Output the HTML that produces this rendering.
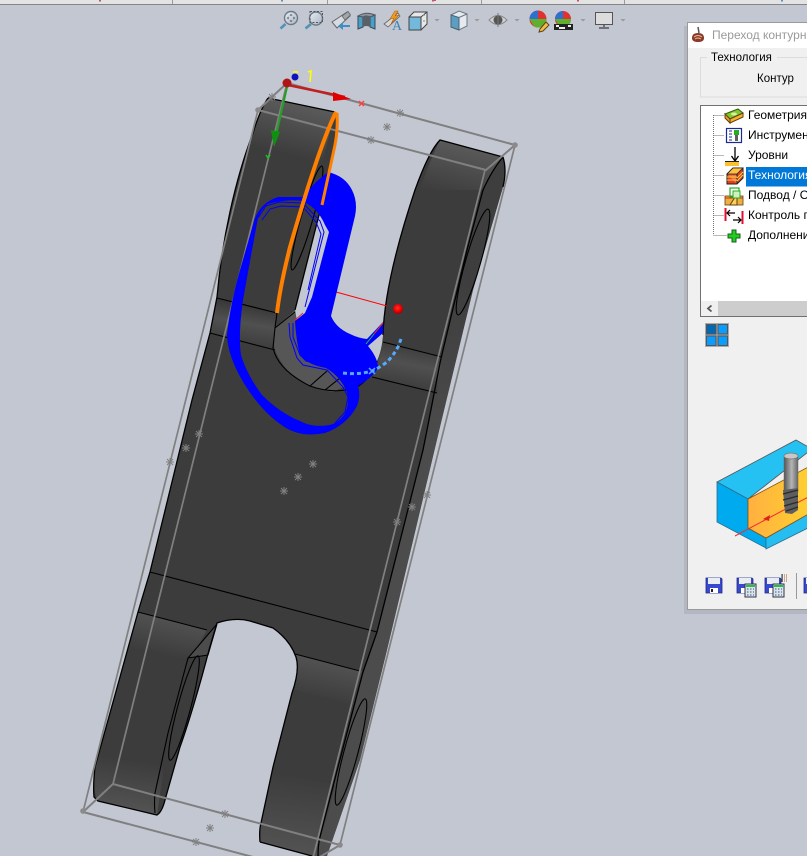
<!DOCTYPE html>
<html><head><meta charset="utf-8">
<style>
html,body{margin:0;padding:0;width:807px;height:856px;overflow:hidden;background:#c2c7d2}
svg{display:block}
text{font-family:"Liberation Sans",sans-serif;font-size:12px;fill:#000}
</style></head>
<body>
<svg width="807" height="856" viewBox="0 0 807 856" xmlns="http://www.w3.org/2000/svg">
<defs>
<clipPath id="cp"><path d="M268,98 L335,112 Q339,114 338,122 L336,137 L322,203 L295,310 L300,340 L340,360 L370,365 L377,361 Q382,350 383,335 C384,300 395,250 415,190 C424,165 432,148 440,140 L503,157 Q507,170 503,187 L473,290 L440,427 L387,650 L360,760 L327,856 L312,856 L260,842 Q259,830 261,823 L273,767 L292,693 Q300,670 296,657 Q290,640 273,628 L250,621 Q235,617 217,623 L209,650 C200,685 188,725 180,747 L165,800 Q162,812 157,815 L98,801 L94,797 Q93,785 95,767 L120,677 L138,612 L150,572 L192,400 L210,333 L217,297 C222,240 235,180 253,133 Q260,110 268,98 Z"/></clipPath>
<linearGradient id="side" gradientUnits="userSpaceOnUse" x1="0" y1="280" x2="0" y2="450"><stop offset="0" stop-color="#3e3e3e"/><stop offset="1" stop-color="#4c4c4c"/></linearGradient>
<linearGradient id="topR" gradientUnits="userSpaceOnUse" x1="475" y1="148" x2="462" y2="200"><stop offset="0" stop-color="#5a5a5a"/><stop offset="1" stop-color="#3c3c3c"/></linearGradient>
<linearGradient id="topL" gradientUnits="userSpaceOnUse" x1="300" y1="105" x2="288" y2="155"><stop offset="0" stop-color="#5a5a5a"/><stop offset="1" stop-color="#3c3c3c"/></linearGradient>
<linearGradient id="bandL" gradientUnits="userSpaceOnUse" x1="247" y1="305" x2="240" y2="345"><stop offset="0" stop-color="#383838"/><stop offset=".45" stop-color="#505050"/><stop offset="1" stop-color="#3c3c3c"/></linearGradient>
<linearGradient id="bandR" gradientUnits="userSpaceOnUse" x1="412" y1="345" x2="404" y2="388"><stop offset="0" stop-color="#3c3c3c"/><stop offset=".45" stop-color="#505050"/><stop offset="1" stop-color="#3c3c3c"/></linearGradient>
<linearGradient id="lowA" gradientUnits="userSpaceOnUse" x1="170" y1="618" x2="162" y2="655"><stop offset="0" stop-color="#525252"/><stop offset="1" stop-color="#3c3c3c"/></linearGradient>
<linearGradient id="lowB" gradientUnits="userSpaceOnUse" x1="328" y1="662" x2="320" y2="700"><stop offset="0" stop-color="#525252"/><stop offset="1" stop-color="#3c3c3c"/></linearGradient>
<linearGradient id="tipA" gradientUnits="userSpaceOnUse" x1="132" y1="760" x2="125" y2="808"><stop offset="0" stop-color="#3c3c3c"/><stop offset="1" stop-color="#525252"/></linearGradient>
<linearGradient id="tipB" gradientUnits="userSpaceOnUse" x1="298" y1="775" x2="288" y2="850"><stop offset="0" stop-color="#3c3c3c"/><stop offset="1" stop-color="#525252"/></linearGradient>
<radialGradient id="rdot" cx=".45" cy=".4" r=".6"><stop offset="0" stop-color="#ff3030"/><stop offset=".6" stop-color="#ee0000"/><stop offset="1" stop-color="#a00000"/></radialGradient>
<linearGradient id="org" x1="0" y1="0" x2="1" y2="0"><stop offset="0" stop-color="#ffb040"/><stop offset="1" stop-color="#ffd030"/></linearGradient>
<linearGradient id="shank" x1="0" y1="0" x2="1" y2="0"><stop offset="0" stop-color="#555"/><stop offset=".55" stop-color="#b5b5b5"/><stop offset="1" stop-color="#666"/></linearGradient>
<linearGradient id="lens" x1="0" y1="0" x2="1" y2="1"><stop offset="0" stop-color="#e8eef5"/><stop offset="1" stop-color="#a8b4c2"/></linearGradient>
<g id="s" stroke="#808080" stroke-width="1" fill="none"><path d="M-4,0H4M0,-4V4M-3,-3L3,3M-3,3L3,-3"/></g>
</defs>

<!-- top strip -->
<rect x="0" y="0" width="807" height="4" fill="#e3e3e3"/>
<rect x="0" y="4" width="807" height="1" fill="#858585"/>
<path d="M327.500,0V4M481.500,0V4M624.500,0V4M172.500,0V4" stroke="#9a9a9a"/>
<path d="M282,0V1.500" stroke="#3070c0" stroke-width="1.500"/>
<path d="M100,0V1.500M433,0V1.500M578,0V1.500M435,0V1" stroke="#c02040" stroke-width="1.500"/>
<path d="M782,0V1.500" stroke="#3070c0" stroke-width="1.500"/>

<!-- toolbar icons -->
<g>
 <circle cx="291" cy="18" r="6.500" fill="url(#lens)" stroke="#6c7a88" stroke-width="1.400"/>
 <path d="M285.500,24L280.500,28.500" stroke="#4f93b8" stroke-width="2.600"/>
 <path d="M291,14l-1.500,1.500h3zM291,22l-1.500,-1.500h3zM287,18l1.500,-1.500v3zM295,18l-1.500,-1.500v3z" fill="#444"/>
 <circle cx="316" cy="18.500" r="6.500" fill="url(#lens)" stroke="#6c7a88" stroke-width="1.400"/>
 <path d="M311,24L305.500,28.500" stroke="#4f93b8" stroke-width="2.600"/>
 <rect x="310" y="11.500" width="12.500" height="11" fill="none" stroke="#555" stroke-width="1" stroke-dasharray="2 1.500"/>
 <path d="M332,22L347,12L350,16L337,28Z" fill="#d8dce0" stroke="#666" stroke-width="1"/>
 <path d="M342,16L348,11.500L350.500,15L345,20Z" fill="#a0a6ac" stroke="#666" stroke-width=".8"/>
 <path d="M350,25H343V22L338,26L343,30V27H350Z" fill="#3d8fc6"/>
 <path d="M358,16V29L363,27V17Z M370,17V27L375,29V15Z" fill="#4a9fc4" stroke="#3a4a58" stroke-width="1"/>
 <path d="M358,16Q366,11 375,15L370,17Q366,15 363,17Z" fill="#8f959c" stroke="#505860" stroke-width="1"/>
 <path d="M363,17Q366,15 370,17V27Q366,25 363,27Z" fill="#5a6068"/>
 <path d="M384,24L398,13L400,16L388,27Z" fill="#d8d8d8" stroke="#666" stroke-width=".8"/>
 <path d="M395,11L390,19L394,18L391,24L399,15L395,16L398,11Z" fill="#f0a020" stroke="#b06010" stroke-width=".6"/>
 <text x="392" y="30" style="font-size:14px;font-family:'Liberation Serif',serif;fill:#3c83b8">A</text>
 <path d="M409,17L414,12H427V24L421,30H409Z" fill="#e8e8e8" stroke="#444" stroke-width="1"/>
 <path d="M409,17H421V30H409Z" fill="#74b8dc" stroke="#444" stroke-width="1"/>
 <path d="M421,17L427,12" stroke="#444"/>
 <path d="M423,15h2M423,21h2" stroke="#888"/>
 <path d="M434.500,19h5l-2.500,2.500z" fill="#999"/>
 <path d="M451,15L459,11L467,14V26L459,30L451,27Z" fill="#e6eaee" stroke="#6a7882" stroke-width="1"/>
 <path d="M451,15L459,17.500V30L451,27Z" fill="#5c9dc2" stroke="#4a6474" stroke-width="1"/>
 <path d="M459,17.500L467,14" stroke="#6a7882"/>
 <path d="M474.500,19h5l-2.500,2.500z" fill="#999"/>
 <path d="M489,20Q498,11 507,20Q498,29 489,20Z" fill="#d0d2d4" stroke="#888" stroke-width="1"/>
 <circle cx="498" cy="20" r="4.500" fill="#555"/>
 <path d="M498,13V27" stroke="#777" stroke-width="1"/>
 <path d="M514.500,19h5l-2.500,2.500z" fill="#999"/>
 <circle cx="538" cy="19" r="8.500" fill="#e03030"/>
 <path d="M538,19L529.500,19A8.500,8.500 0 0 1 538,10.500Z" fill="#2f6fd0"/>
 <path d="M529.500,19H546.500A8.500,8.500 0 0 1 534,26.500Z" fill="#60b030"/>
 <path d="M540,29L546,22L549,25L543,31L539,32Z" fill="#f0c040" stroke="#604020" stroke-width="1"/>
 <circle cx="563" cy="19" r="8" fill="#e03030"/>
 <path d="M563,19L555,19A8,8 0 0 1 563,11Z" fill="#2f6fd0"/>
 <path d="M555,19H571A8,8 0 0 1 559,26Z" fill="#60b030"/>
 <rect x="554" y="24" width="19" height="6" fill="#222"/>
 <path d="M556,25h3v2h-3zM562,27h3v2h-3zM568,25h3v2h-3zM559,27h3v2h-3z" fill="#eee"/>
 <path d="M580.500,19h5l-2.500,2.500z" fill="#999"/>
 <rect x="595.500" y="12.500" width="17" height="12" fill="#dcdcdc" stroke="#555" stroke-width="1"/>
 <path d="M604,25V27M599,28H609" stroke="#555" stroke-width="1.500"/>
 <path d="M620.500,19h5l-2.500,2.500z" fill="#999"/>
</g>

<!-- part base -->
<rect x="0" y="0" width="807" height="856" fill="#3c3c3c" clip-path="url(#cp)"/>

<!-- shaded areas, clipped to the silhouette -->
<g clip-path="url(#cp)">
<path d="M503,157 Q507,170 503,187 L473,290 L440,427 L387,650 L360,760 L327,856 L318,856 Q318,845 320,837 L338,767 L363,672 L377,632 L423,450 L427,430 L440,363 L443,350 L467,250 L483,190 Q492,170 503,157 Z" fill="url(#side)"/>
<path d="M440,140 L503,157 Q492,170 483,190 L420,190 Q430,160 440,140Z" fill="url(#topR)"/>
<path d="M268,98 L335,112 L320,172 L248,150 Q256,118 268,98Z" fill="url(#topL)"/>
<path d="M217,298 L277,313 L275,350 L210,333Z" fill="url(#bandL)"/>
<path d="M383,342 L442,357 L437,393 L372,377Q380,360 383,342Z" fill="url(#bandR)"/>
<path d="M138,612 L207,630 L190,660 L125,650Z" fill="url(#lowA)"/>
<path d="M295,654 L362,671 L352,705 L288,688Z" fill="url(#lowB)"/>
<path d="M103,745 L165,760 L157,815 L98,801 Q92,790 95,767Z" fill="url(#tipA)"/>
<path d="M270,770 L335,785 L318,856 L312,856 L260,842 Q259,830 261,823Z" fill="url(#tipB)"/>
<path d="M275,328 L295,310 L348,385 L333,392 Q305,388 287,370 Q275,355 274,345Z" fill="#565656"/>
<path d="M188,658 L217,624 L208,655Z" fill="#4c4c4c"/>
</g>

<!-- black outline -->
<path d="M268,98 L335,112 M322,203 L295,310 M383,335 C384,300 395,250 415,190 C424,165 432,148 440,140 L503,157 M296,657 Q290,640 273,628 L250,621 Q235,617 217,623 L209,650 C200,685 188,725 180,747 L165,800 Q162,812 157,815 L98,801 L94,797 Q93,785 95,767 L120,677 L138,612 L150,572 L192,400 L210,333 L217,297 C222,240 235,180 253,133 Q260,110 268,98 M260,842 Q259,830 261,823 L273,767 L292,693 Q300,670 296,657 M260,842 L312,856" fill="none" stroke="#000" stroke-width="1.300"/>
<path d="M503,157 Q507,170 503,187 M503,157 Q492,170 483,190 L467,250 L443,350 L440,363 L427,430 L423,450 L377,632 L363,672 L338,767 L320,837 Q318,845 318,856" fill="none" stroke="#000" stroke-width="1.300"/>
<path d="M155,813 Q154,803 155,793 L168,733 L188,658 L217,624 L208,655 L188,658" fill="none" stroke="#000" stroke-width="1.100"/>
<path d="M150,572 L377,632 M138,612 L207,630 M295,654 L360,671 M217,298 L277,313 M210,333 L275,350 M383,342 L442,357 M372,377 L437,393" stroke="#000" stroke-width="1.100" fill="none"/>
<path d="M277,313 L275,328 L273,348 Q278,370 310,386 Q335,395 357,387 Q370,380 377,361 M275,328 L295,312 M310,386 L327,371 M325,390 L340,378" stroke="#000" stroke-width="1.100" fill="none"/>
<g fill="none" stroke="#000" stroke-width="1.100">
 <ellipse cx="307" cy="218" rx="6" ry="54" transform="rotate(16 307 218)"/>
 <ellipse cx="473" cy="262" rx="7.500" ry="55" transform="rotate(16 473 262)"/>
 <ellipse cx="184" cy="708" rx="6.500" ry="54" transform="rotate(15 184 708)"/>
 <ellipse cx="351" cy="752" rx="7" ry="55" transform="rotate(15 351 752)"/>
</g>

<path d="M336,292 L387,306" stroke="#ff0000" stroke-width="1"/>

<!-- bbox lines (under toolpath) -->
<g stroke="#808080" stroke-width="2" fill="none">
 <path d="M287,83 L515,145 L486,170 L258,110 Z"/>
 <path d="M258,110 L83,812 M287,83 L113,784 M515,145 L340,845 M485,170 L310,870" stroke-width="1.700"/>
 <path d="M83,812 L113,784 L340,845 L318,858 M83,812 L253,857"/>
</g>
<circle cx="258" cy="110" r="2.800" fill="#8a8a8a"/>
<circle cx="515" cy="145" r="2.800" fill="#8a8a8a"/>
<circle cx="83" cy="811" r="2.800" fill="#8a8a8a"/>
<circle cx="340" cy="845" r="2.800" fill="#8a8a8a"/>

<!-- blue toolpath -->
<path fill-rule="evenodd" fill="#0000ff" d="M328,172 Q345,176 352,190 Q358,202 355,216 L331,316 Q336,328 350,334 Q358,338 367,339 L383,322 L383,333 L368,346 Q378,358 378,368 Q372,378 358,386 Q361,396 357,406 Q347,425 325,433 Q300,438 283,426 Q262,412 245,385 Q228,358 227,335 Q230,305 240,270 L255,218 Q262,202 278,197 L302,197 L316,182 Z
M268,204 Q285,199 302,201 Q318,208 325,225 L329,232 L312,297 L305,313 L295,321 Q296,340 300,355 Q308,365 326,368 Q340,376 347,392 Q350,405 344,415 Q338,423 330,425 Q312,428 300,421 Q280,413 262,395 Q247,375 241,355 Q238,335 243,300 L252,250 L258,218 Q262,208 268,204 Z"/>
<g fill="none" stroke="#0000ff" stroke-width="1">
 <path d="M258,218 L266,206 L279,202 L303,203 L320,221 L324,232 L305,307"/>
 <path d="M262,220 L270,209 L281,206 L303,207 L316,222 L321,234 L308,290"/>
 <path d="M289,323 L290,337 L297,358 L303,365 L327,370 L343,387 L348,397 L345,412 L335,423"/>
 <path d="M293,323 L293,337 L300,355 L306,361 L328,366"/>
</g>
<path d="M294,321 L303,313" stroke="#e03020" stroke-width="1"/>
<path d="M366,344 L374,334" stroke="#20c040" stroke-width="1"/>
<path d="M374,334 L383,323" stroke="#e03020" stroke-width="1"/>

<!-- orange -->
<path d="M336,112 C322,140 305,195 290,247 C283,275 279,295 277,313" fill="none" stroke="#ff8000" stroke-width="4"/>
<path d="M337,113 Q338,130 335,145 L322,205" fill="none" stroke="#ff8000" stroke-width="3"/>

<!-- stars -->
<use href="#s" x="400" y="113"/><use href="#s" x="387" y="127"/><use href="#s" x="371" y="140"/><use href="#s" x="272" y="97"/>
<use href="#s" x="199" y="434"/><use href="#s" x="186" y="448"/><use href="#s" x="170" y="462"/>
<use href="#s" x="313" y="464"/><use href="#s" x="298" y="477"/><use href="#s" x="284" y="491"/>
<use href="#s" x="427" y="495"/><use href="#s" x="412" y="507"/><use href="#s" x="397" y="522"/>
<use href="#s" x="225" y="814"/><use href="#s" x="210" y="828"/><use href="#s" x="196" y="842"/>

<circle cx="398" cy="309" r="5" fill="url(#rdot)"/>
<path d="M401,339 L398,347 Q393,356 387,362 Q379,368 372,371 Q358,375 343,373" fill="none" stroke="#55aaff" stroke-width="3" stroke-dasharray="4 3"/>
<path d="M369,368l6,6M375,368l-6,6" stroke="#55aaff" stroke-width="1.500"/>

<!-- triad -->
<path d="M288,85 L345,97" stroke="#c02020" stroke-width="2.500"/>
<path d="M333,92 L351,99 L333,101Z" fill="#e00000"/>
<path d="M359,101l5,5M364,101l-5,5" stroke="#ff4040" stroke-width="1.500"/>
<path d="M287,87 L275,140" stroke="#20a020" stroke-width="2"/>
<path d="M271,130 L280,132 L274,147Z" fill="#109010"/>
<path d="M266,155l2,3l2,-3" fill="none" stroke="#20c020" stroke-width="1.500"/>
<circle cx="287" cy="83" r="4.500" fill="#b01515"/>
<circle cx="295" cy="77" r="3.500" fill="#1010c0"/>
<path d="M293,72l5,0" stroke="#ffff00" stroke-width="1.500"/>
<path d="M308,72 L311,71 L310,82" stroke="#ffff00" stroke-width="1.600" fill="none"/>

<!-- dialog -->
<rect x="684" y="26" width="130" height="588" fill="#000" opacity=".08"/>
<rect x="687.500" y="22.500" width="125" height="587" fill="#f0f0f0" stroke="#9a9a9a"/>
<rect x="688" y="23" width="119" height="25" fill="#fff"/>
<path d="M698,27L699,33" stroke="#555" stroke-width="1.500"/>
<path d="M692,38Q692,33 698,33Q704,33 704,38Q704,42 698,42Q692,42 692,38Z" fill="#8c3a28"/>
<path d="M694,37Q698,34 702,37M695,39Q698,37 701,39" stroke="#e8c0a0" stroke-width="1" fill="none"/>
<text x="712" y="39" style="fill:#9a9a9a">Переход контурной обработки</text>

<rect x="700.500" y="57.500" width="120" height="39.500" fill="none" stroke="#dcdcdc"/>
<rect x="707" y="52" width="70" height="12" fill="#f0f0f0"/>
<text x="711" y="61" style="font-size:11.500px">Технология</text>
<text x="757" y="82" style="font-size:11.500px">Контур</text>

<rect x="700.500" y="105.500" width="120" height="211" fill="#fff" stroke="#707070"/>
<path d="M713.500,115V235M713.500,115.500H724M713.500,135.500H724M713.500,155.500H724M713.500,175.500H724M713.500,195.500H724M713.500,215.500H724M713.500,235.500H727" stroke="#707070" stroke-dasharray="1 1" fill="none"/>
<rect x="746" y="167" width="62" height="19.500" fill="#0078d7"/>
<text x="748" y="119">Геометрия</text>
<text x="748" y="139">Инструмент</text>
<text x="748" y="159">Уровни</text>
<text x="748" y="179" style="fill:#fff">Технология</text>
<text x="748" y="199">Подвод / Отвод</text>
<text x="748" y="219">Контроль перемещений</text>
<text x="748" y="239">Дополнения</text>

<path d="M725,114L738,109L743,113L730,119Z" fill="#80c830" stroke="#3a5a10" stroke-width="1"/>
<path d="M725,114L730,119V123L725,118Z" fill="#f0a020" stroke="#604010" stroke-width="1"/>
<path d="M730,119L743,113V117L730,123Z" fill="#f8b030" stroke="#604010" stroke-width="1"/>
<ellipse cx="734" cy="114" rx="3" ry="1.500" fill="#d8f0a0"/>
<rect x="726.500" y="128.500" width="15" height="14" fill="#fff" stroke="#1a2a90" stroke-width="1.200"/>
<path d="M729,131h3M729,134h3M729,137h3M729,140h3" stroke="#1a2a90"/>
<rect x="734" y="130" width="5" height="5" fill="#20b020"/>
<rect x="735" y="135" width="3" height="6" fill="#606060"/>
<path d="M735,147V160" stroke="#000" stroke-width="1.300"/>
<path d="M731.500,156L735,161L738.500,156" fill="none" stroke="#000" stroke-width="1.300"/>
<rect x="725" y="161" width="14" height="5" fill="#ffc030"/>
<path d="M725,161.500H739" stroke="#222"/>
<path d="M727,174L733,168H743V178L737,184H727Z" fill="#e04020" stroke="#222" stroke-width="1"/>
<path d="M727,174H737V184" fill="#f07040" stroke="#222" stroke-width="1"/>
<path d="M727,177H737M727,180H737M737,178L743,172M737,181L743,175" stroke="#ffd040" stroke-width="1"/>
<path d="M733,168H743L737,174H727Z" fill="#ffc040" stroke="#222" stroke-width=".8"/>
<rect x="725" y="196" width="18" height="9" fill="#f0b040" stroke="#604010" stroke-width=".8"/>
<path d="M725,198H743" stroke="#e02020"/>
<path d="M730,205L737,194V205Z" fill="#ffd060" stroke="#604010" stroke-width="1"/>
<rect x="730" y="188" width="9" height="9" fill="none" stroke="#20b020" stroke-width="1.200"/>
<rect x="733" y="191" width="7" height="7" fill="#d0f0c0" stroke="#20b020" stroke-width="1"/>
<path d="M725.500,208V221M742.500,211V224" stroke="#e01030" stroke-width="2"/>
<path d="M727,213H735M730,210L727,213L730,216M733,220H741M738,217L741,220L738,223" stroke="#000" stroke-width="1.200" fill="none"/>
<path d="M732,230H736V234H740V238H736V242H732V238H728V234H732Z" fill="#22cc22" stroke="#156015" stroke-width="1"/>

<rect x="701" y="301" width="119" height="15" fill="#f0f0f0"/>
<rect x="718" y="301" width="90" height="15" fill="#cdcdcd"/>
<path d="M711.500,305.500L708,308.500L711.500,311.500" fill="none" stroke="#555" stroke-width="1.800"/>

<rect x="705" y="323" width="24" height="24" fill="#ababab"/>
<rect x="706.500" y="324.500" width="9.500" height="9.500" fill="#0068b4" stroke="#555" stroke-width="1"/>
<rect x="718" y="324.500" width="9.500" height="9.500" fill="#0a9cff" stroke="#555" stroke-width="1"/>
<rect x="706.500" y="336" width="9.500" height="9.500" fill="#0a9cff" stroke="#555" stroke-width="1"/>
<rect x="718" y="336" width="9.500" height="9.500" fill="#0a9cff" stroke="#555" stroke-width="1"/>

<path d="M717,482L796,440L812,449L748,499Z" fill="#26c1f3" stroke="#555" stroke-width=".8"/>
<path d="M717,482L748,499V528L766,538V548L717,522Z" fill="#00aaee" stroke="#2a6f8f" stroke-width=".8"/>
<path d="M766,538L812,512V526L766,549Z" fill="#26bdf0" stroke="#2a6f8f" stroke-width=".8"/>
<path d="M748,499L812,465V512L766,538L748,528Z" fill="url(#org)" stroke="#805010" stroke-width=".8"/>
<path d="M735,536L812,495" stroke="#f03030" stroke-width="1"/>
<path d="M763,519L770,515L769,521Z" fill="#e02020"/>
<rect x="784" y="456" width="14" height="36" fill="url(#shank)" stroke="#666" stroke-width=".5"/>
<ellipse cx="791" cy="456" rx="7" ry="3" fill="#c8c8c8" stroke="#777" stroke-width=".7"/>
<path d="M783,490L798,488L798,510L792,514L785,513Z" fill="#5e5e5e"/>
<path d="M783,494L798,490M783,500L798,496M784,506L798,502M786,511L798,507" stroke="#2a2a2a" stroke-width="1.200"/>

<g>
 <path d="M706,578H721L722,579V593H706Z" fill="#3a48d0" stroke="#202a80" stroke-width=".8"/>
 <rect x="708" y="578" width="12" height="6" fill="#e8ecf4"/>
 <rect x="710" y="588" width="8" height="5" fill="#fff"/><rect x="711" y="589" width="2" height="3" fill="#222"/>
 <path d="M737,578H752L753,579V593H737Z" fill="#3a48d0" stroke="#202a80" stroke-width=".8"/>
 <rect x="739" y="578" width="12" height="6" fill="#e8ecf4"/>
 <rect x="741" y="588" width="8" height="5" fill="#fff"/>
 <rect x="745" y="584" width="11" height="13" fill="#d8e4f0" stroke="#334" stroke-width="1"/>
 <rect x="746" y="585" width="9" height="2" fill="#20c040"/>
 <path d="M747,589h1.500M750,589h1.500M753,589h1M747,592h1.500M750,592h1.500M753,592h1M747,595h1.500M750,595h1.500M753,595h1" stroke="#456"/>
 <path d="M765,578H780L781,579V593H765Z" fill="#3a48d0" stroke="#202a80" stroke-width=".8"/>
 <rect x="767" y="578" width="12" height="6" fill="#e8ecf4"/>
 <rect x="769" y="588" width="8" height="5" fill="#fff"/>
 <rect x="773" y="584" width="11" height="13" fill="#d8e4f0" stroke="#334" stroke-width="1"/>
 <rect x="774" y="585" width="9" height="2" fill="#20c040"/>
 <path d="M775,589h1.500M778,589h1.500M781,589h1M775,592h1.500M778,592h1.500M781,592h1M775,595h1.500M778,595h1.500M781,595h1" stroke="#456"/>
 <path d="M782,575h6M782,577h6M782,579h6M782,581h6" stroke="#a06030" stroke-dasharray="1 1"/>
 <path d="M782,574V582" stroke="#333"/>
 <path d="M796.500,573V599" stroke="#999"/>
 <path d="M804,578H812V593H804Z" fill="#3a48d0" stroke="#202a80" stroke-width=".8"/>
 <rect x="806" y="578" width="6" height="6" fill="#e8ecf4"/>
</g>
</svg>
</body></html>
